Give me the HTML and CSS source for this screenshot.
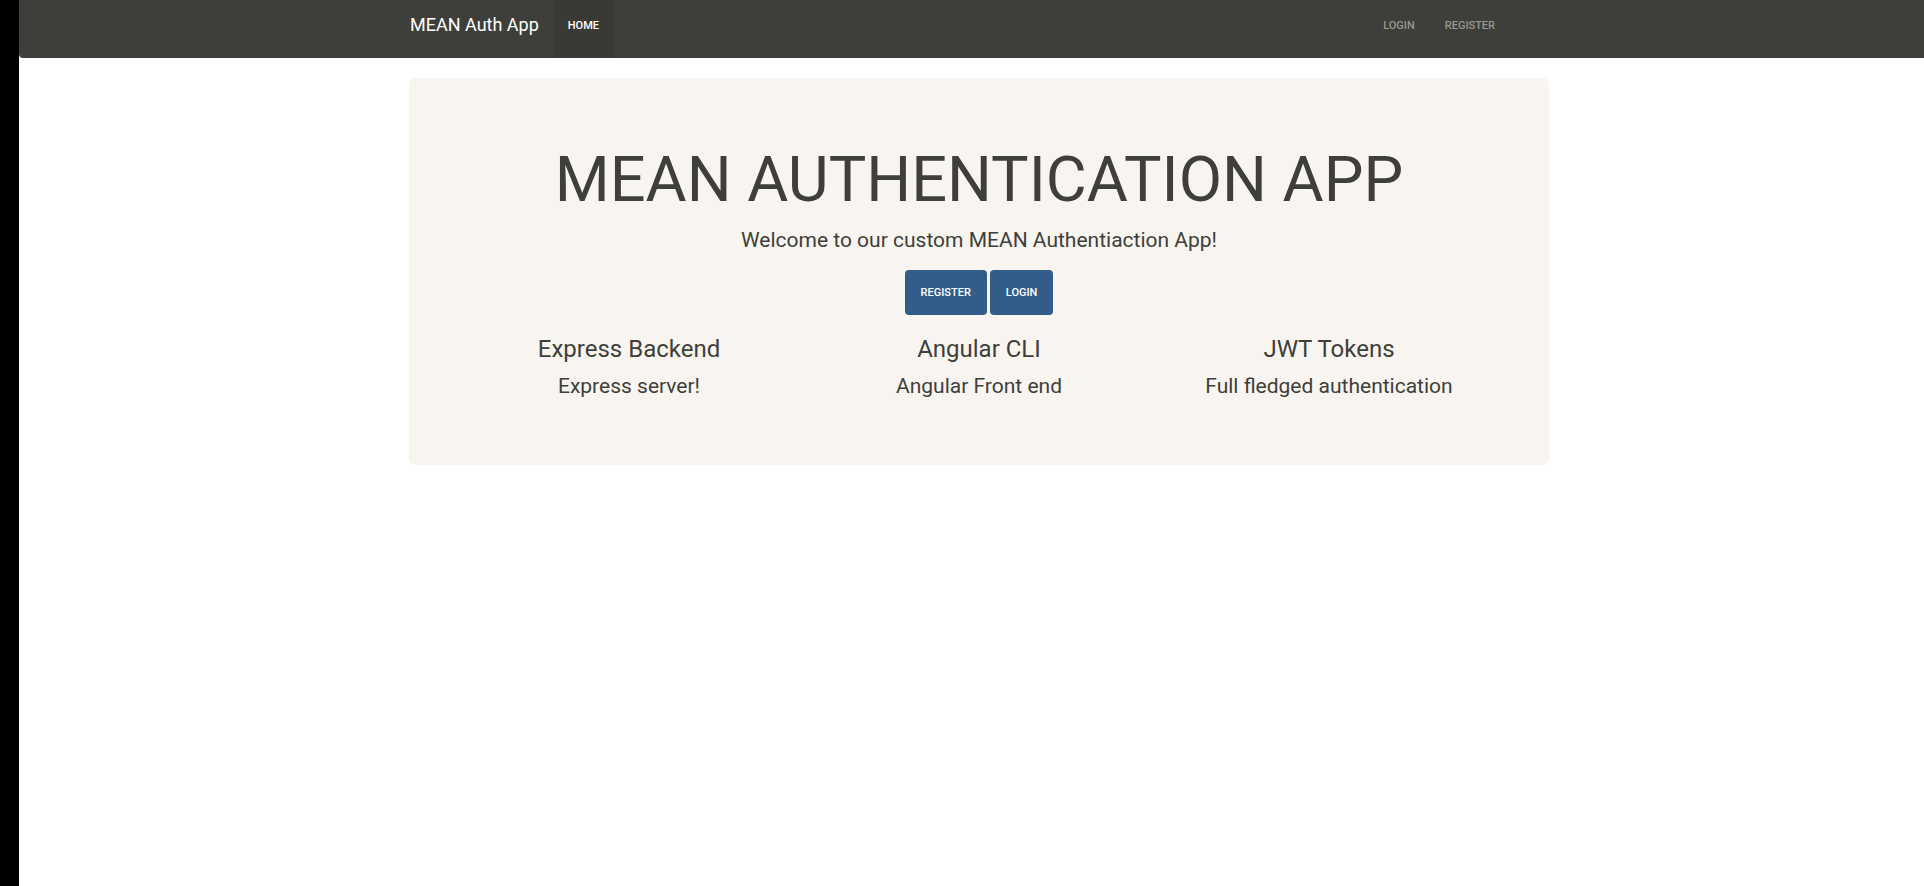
FILE: index.html
```html
<!DOCTYPE html>
<html lang="en">
<head>
<meta charset="utf-8">
<title>MEAN Auth App</title>
<link rel="stylesheet" href="styles.css">
</head>
<body>
<div class="strip"></div>
<div class="main">
  <nav class="navbar">
    <div class="nav-inner">
      <a class="brand" href="#">MEAN Auth App</a>
      <ul class="nav-left">
        <li><a class="nav-link active" href="#">Home</a></li>
      </ul>
      <ul class="nav-right">
        <li><a class="nav-link" href="#">Login</a></li>
        <li><a class="nav-link" href="#">Register</a></li>
      </ul>
    </div>
  </nav>
  <div class="container">
    <div class="jumbotron">
      <h1 class="title">MEAN AUTHENTICATION APP</h1>
      <p class="lead">Welcome to our custom MEAN Authentiaction App!</p>
      <div class="actions">
        <a class="btn" href="#">Register</a>
        <a class="btn" href="#">Login</a>
      </div>
      <div class="features">
        <div class="feature">
          <h3>Express Backend</h3>
          <p>Express server!</p>
        </div>
        <div class="feature">
          <h3>Angular CLI</h3>
          <p>Angular Front end</p>
        </div>
        <div class="feature">
          <h3>JWT Tokens</h3>
          <p>Full fledged authentication</p>
        </div>
      </div>
    </div>
  </div>
</div>
</body>
</html>
```
FILE: styles.css
```css
* { box-sizing: border-box; }
html, body { margin: 0; padding: 0; height: 100%; }
body {
  display: flex;
  font-family: Roboto, "Liberation Sans", sans-serif;
  color: #3e3f3a;
  background: #fff;
}
.strip { width: 19px; flex: none; background: #000; }
.main { flex: 1; min-width: 0; }
.navbar {
  height: 58px;
  background: #3e3f3a;
  border-bottom-left-radius: 4px;
}
.nav-inner {
  display: flex;
  height: 58px;
  padding-left: 391px;
  width: 1531px;
}
.brand {
  font-size: 18px;
  line-height: 50px;
  color: #fff;
  text-decoration: none;
  margin-right: 14px;
}
.nav-left, .nav-right {
  list-style: none;
  margin: 0;
  padding: 0;
  display: flex;
}
.nav-right { margin-left: auto; margin-right: 40px; }
.nav-link {
  display: block;
  height: 58px;
  padding: 0 15px;
  line-height: 52px;
  font-size: 11px;
  font-weight: 500;
  text-transform: uppercase;
  color: #98978b;
  text-decoration: none;
}
.nav-link.active { background: #393a35; color: #fff; }
.container {
  padding-left: 390px;
  padding-top: 20px;
}
.jumbotron {
  width: 1140px;
  height: 387px;
  background: #f8f5f0;
  border-radius: 6px;
  padding: 66px 45px 0;
  text-align: center;
}
.title {
  margin: 0;
  font-size: 63px;
  line-height: 72px;
  font-weight: 400;
}
.lead {
  margin: 9px 0 0;
  font-size: 21px;
  line-height: 30px;
}
.actions {
  display: flex;
  justify-content: center;
  gap: 3px;
  margin-top: 15px;
}
.btn {
  display: block;
  height: 45px;
  line-height: 45px;
  padding: 0 16px;
  background: #325d88;
  color: #fff;
  border-radius: 4px;
  font-size: 11px;
  font-weight: 500;
  text-transform: uppercase;
  text-decoration: none;
}
.features {
  display: grid;
  grid-template-columns: repeat(3, 1fr);
  margin-top: 21px;
}
.feature h3 {
  margin: 0;
  font-size: 24px;
  line-height: 26px;
  font-weight: 400;
}
.feature p {
  margin: 9px 0 0;
  font-size: 21px;
  line-height: 30px;
}
```
